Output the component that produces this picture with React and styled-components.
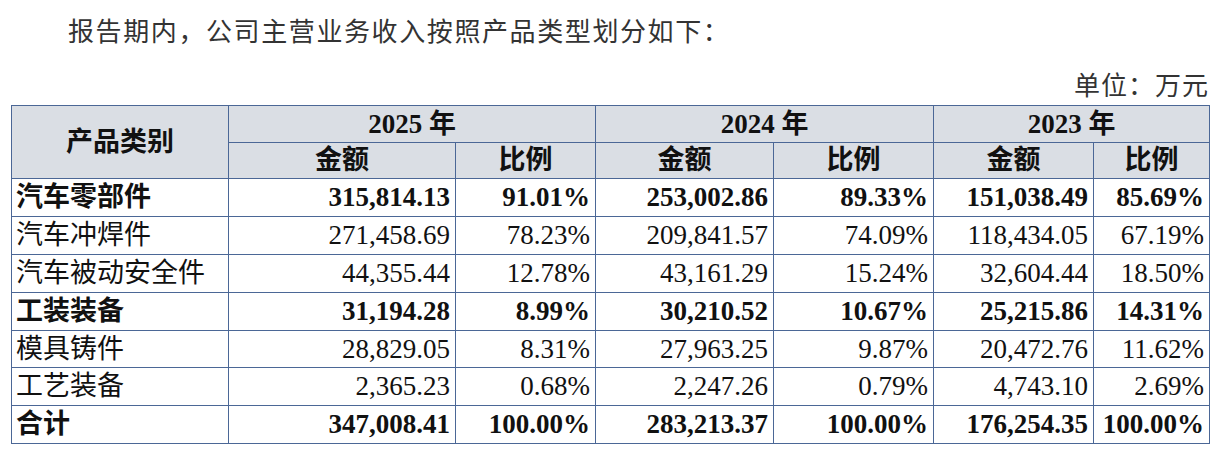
import React from "react";
import styled, { createGlobalStyle } from "styled-components";

const rows = [
  { name: "汽车零部件", bold: true, v: ["315,814.13", "91.01%", "253,002.86", "89.33%", "151,038.49", "85.69%"] },
  { name: "汽车冲焊件", v: ["271,458.69", "78.23%", "209,841.57", "74.09%", "118,434.05", "67.19%"] },
  { name: "汽车被动安全件", v: ["44,355.44", "12.78%", "43,161.29", "15.24%", "32,604.44", "18.50%"] },
  { name: "工装装备", bold: true, v: ["31,194.28", "8.99%", "30,210.52", "10.67%", "25,215.86", "14.31%"] },
  { name: "模具铸件", v: ["28,829.05", "8.31%", "27,963.25", "9.87%", "20,472.76", "11.62%"] },
  { name: "工艺装备", v: ["2,365.23", "0.68%", "2,247.26", "0.79%", "4,743.10", "2.69%"] },
  { name: "合计", bold: true, v: ["347,008.41", "100.00%", "283,213.37", "100.00%", "176,254.35", "100.00%"] },
];

const years = ["2025", "2024", "2023"];
const colWidths = [217, 227, 140, 178, 160, 160, 116];

function App() {
  return (
    <>
      <GlobalStyle />
      <Page>
        <Intro>报告期内，公司主营业务收入按照产品类型划分如下：</Intro>
        <Unit>单位：万元</Unit>
        <Table>
          <colgroup>
            {colWidths.map((w, i) => (
              <col key={i} style={{ width: w }} />
            ))}
          </colgroup>
          <thead>
            <HeadRow $h={37}>
              <Th rowSpan={2}>产品类别</Th>
              {years.map((y) => (
                <Th key={y} colSpan={2}>
                  {y} 年
                </Th>
              ))}
            </HeadRow>
            <HeadRow $h={36}>
              {years.map((y) => (
                <React.Fragment key={y}>
                  <Th>金额</Th>
                  <Th>比例</Th>
                </React.Fragment>
              ))}
            </HeadRow>
          </thead>
          <tbody>
            {rows.map((r) => (
              <Row key={r.name} $bold={r.bold}>
                <Label>{r.name}</Label>
                {r.v.map((val, i) => (
                  <Num key={i}>{val}</Num>
                ))}
              </Row>
            ))}
          </tbody>
        </Table>
      </Page>
    </>
  );
}

export default App;

const GlobalStyle = createGlobalStyle`
  body {
    margin: 0;
    background: #ffffff;
  }
`;

const Page = styled.div`
  width: 1220px;
  height: 456px;
  box-sizing: border-box;
  padding: 18px 11px 0;
  font-family: "Liberation Serif", "Noto Sans CJK SC", serif;
  color: #111;
`;

const Intro = styled.p`
  margin: 0;
  padding-left: 57px;
  font-size: 26px;
  line-height: 30px;
  color: #333;
  letter-spacing: 1.6px;
`;

const Unit = styled.div`
  margin-top: 24px;
  text-align: right;
  font-size: 26px;
  line-height: 30px;
  color: #333;
  letter-spacing: 1px;
`;

const Table = styled.table`
  margin-top: 3px;
  width: 1198px;
  table-layout: fixed;
  border-collapse: collapse;
  font-size: 27px;
`;

const HeadRow = styled.tr`
  height: ${(p) => p.$h}px;
  background: #dadee4;
`;

const Th = styled.th`
  border: 1px solid #4b6796;
  padding: 0;
  font-weight: 700;
  text-align: center;
  line-height: 1;
`;

const Row = styled.tr`
  height: 37.9px;
  font-weight: ${(p) => (p.$bold ? 700 : 400)};
`;

const Label = styled.td`
  border: 1px solid #4b6796;
  padding: 0 0 0 4px;
  text-align: left;
  line-height: 1;
  white-space: nowrap;
`;

const Num = styled.td`
  border: 1px solid #4b6796;
  padding: 0 5px 0 0;
  text-align: right;
  line-height: 1;
  white-space: nowrap;
`;
